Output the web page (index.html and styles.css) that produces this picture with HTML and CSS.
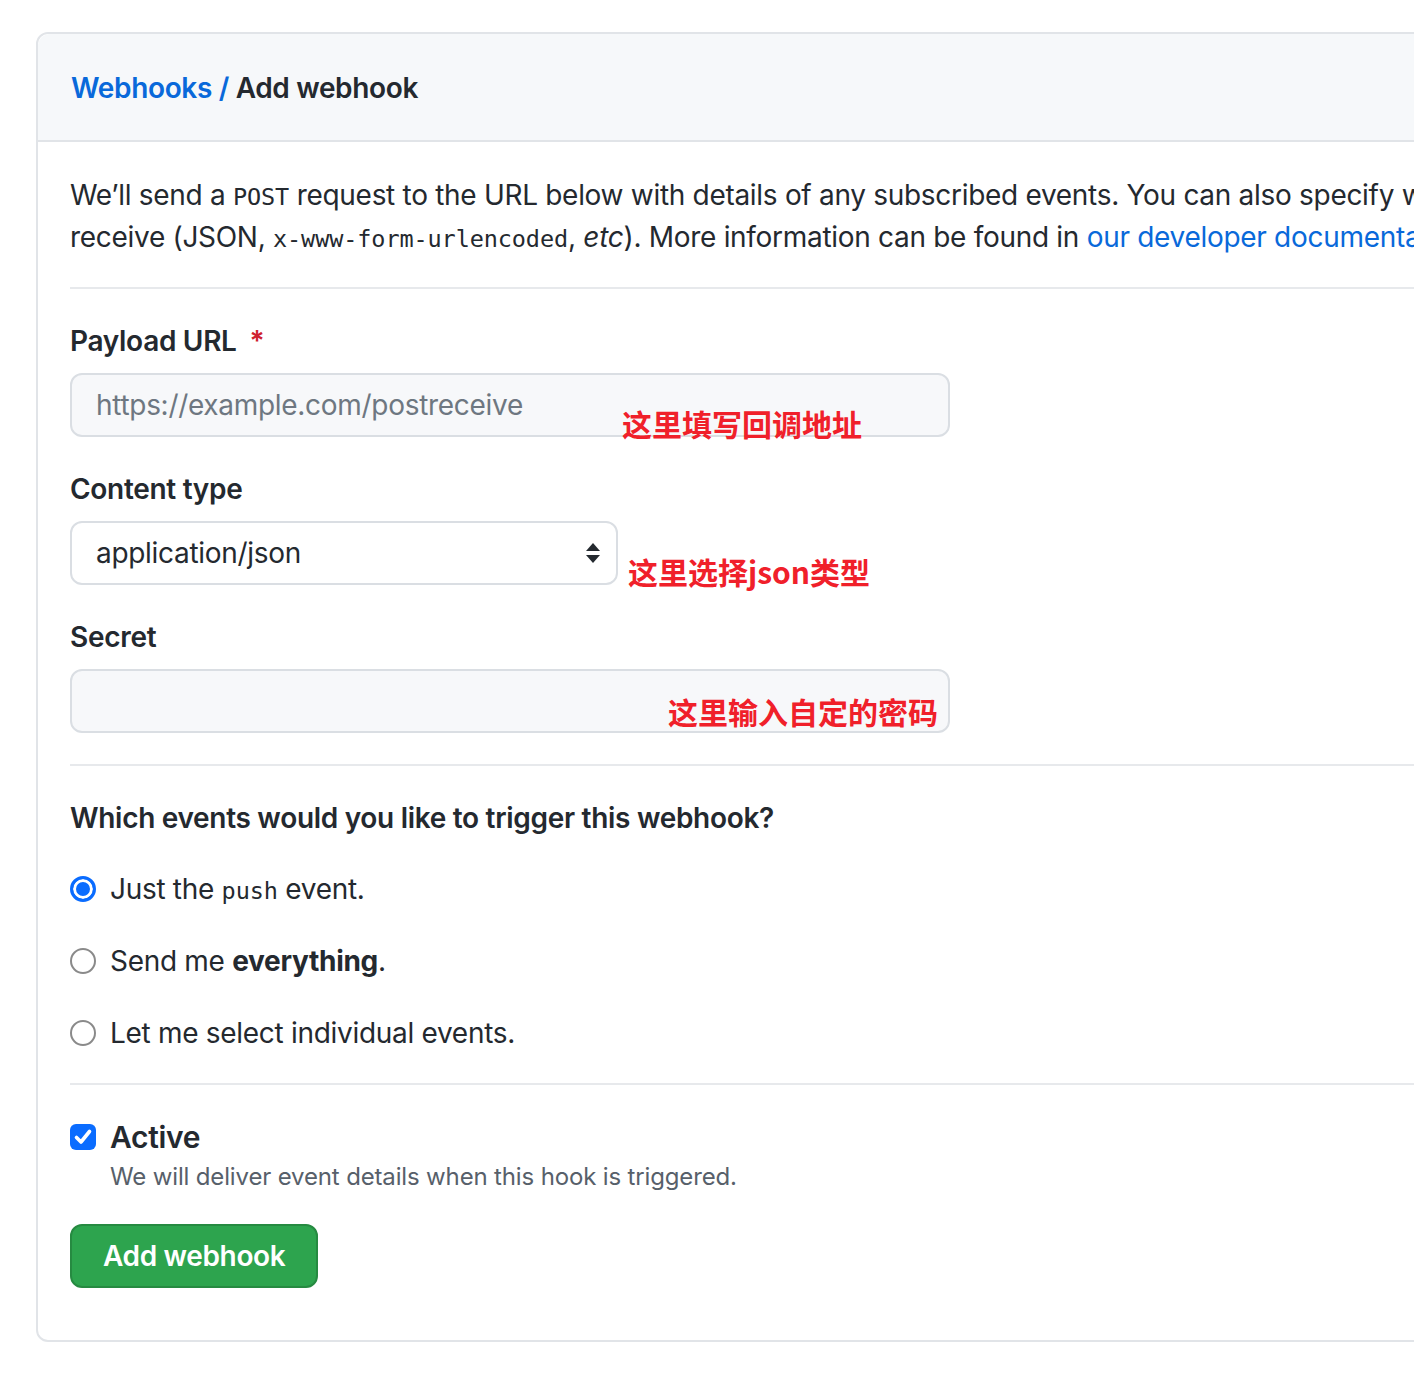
FILE: index.html
```html
<!DOCTYPE html>
<html lang="en">
<head>
<meta charset="utf-8">
<title>Add webhook</title>
<link rel="stylesheet" href="styles.css">
</head>
<body>
<div class="box">
  <div class="box-header">
    <h2 class="title"><a class="crumb" href="#">Webhooks</a> <span class="slash">/</span> Add webhook</h2>
  </div>
  <div class="box-body">
    <p class="intro">We’ll send a <code>POST</code> request to the URL below with details of any subscribed events. You can also specify which data format you’d like to<br>receive (JSON, <code>x-www-form-urlencoded</code>, <em>etc</em>). More information can be found in <a class="link" href="#">our developer documentation</a>.</p>
    <hr class="sep">
    <div class="group">
      <label class="label">Payload URL <span class="req">*</span></label>
      <div class="field-wrap wide">
        <div class="input"><span class="placeholder">https://example.com/postreceive</span></div>
        <span class="note note-url">这里填写回调地址</span>
      </div>
    </div>
    <div class="group">
      <label class="label">Content type</label>
      <div class="field-wrap">
        <div class="select">
          <span>application/json</span>
          <svg class="arrows" width="16" height="22" viewBox="0 0 16 22"><path d="M8 1 L15 9 L1 9 Z" fill="#24292f"/><path d="M1 13 L15 13 L8 21 Z" fill="#24292f"/></svg>
        </div>
        <span class="note note-type">这里选择json类型</span>
      </div>
    </div>
    <div class="group">
      <label class="label">Secret</label>
      <div class="field-wrap wide">
        <div class="input"></div>
        <span class="note note-secret">这里输入自定的密码</span>
      </div>
    </div>
    <hr class="sep">
    <h3 class="question">Which events would you like to trigger this webhook?</h3>
    <div class="radios">
      <div class="radio-row"><span class="radio checked"></span><span>Just the <code>push</code> event.</span></div>
      <div class="radio-row"><span class="radio"></span><span>Send me <strong>everything</strong>.</span></div>
      <div class="radio-row"><span class="radio"></span><span>Let me select individual events.</span></div>
    </div>
    <hr class="sep">
    <div class="active">
      <div class="check-row">
        <span class="checkbox"><svg width="26" height="26" viewBox="0 0 26 26"><path d="M6.5 13.5 L11 18 L19.5 7.5" fill="none" stroke="#fff" stroke-width="3.6" stroke-linecap="round" stroke-linejoin="round"/></svg></span>
        <span class="active-label">Active</span>
      </div>
      <p class="hint">We will deliver event details when this hook is triggered.</p>
    </div>
    <button class="btn" type="button">Add webhook</button>
  </div>
</div>
</body>
</html>
```
FILE: styles.css
```css
html, body {
  overflow: hidden;
}
body {
  margin: 0;
  background: #ffffff;
  font-family: Inter, "Liberation Sans", "Noto Sans CJK SC", sans-serif;
  color: #24292f;
  font-size: 28px;
  line-height: 42px;
}
.box {
  margin: 32px 0 0 36px;
  width: 1600px;
  border: 2px solid #e1e4e8;
  border-radius: 12px;
  background: #fff;
}
.box-header {
  background: #f6f8fa;
  border-bottom: 2px solid #e1e4e8;
  border-radius: 12px 12px 0 0;
  padding: 33px 33px 31px 33px;
}
.title {
  margin: 0;
  font-size: 28px;
  line-height: 42px;
  font-weight: 600;
  letter-spacing: -0.35px;
}
.crumb, .slash {
  color: #0969da;
  text-decoration: none;
}
.box-body {
  padding: 32px 32px 52px 32px;
}
.intro {
  margin: 0;
  white-space: nowrap;
  letter-spacing: -0.3px;
}
code {
  font-family: "DejaVu Sans Mono", "Liberation Mono", monospace;
  font-size: 23.5px;
  line-height: 1;
  letter-spacing: -0.1px;
}
.link {
  color: #0969da;
  text-decoration: none;
}
.sep {
  margin: 29px 0 31px 0;
  border: 0;
  height: 2px;
  background: #e7e9ec;
}
.group {
  margin-bottom: 31px;
}
.group:last-of-type {
  margin-bottom: 0;
}
.label {
  display: block;
  font-weight: 600;
  margin-bottom: 11px;
  letter-spacing: -0.3px;
}
.req {
  color: #cf222e;
  margin-left: 6px;
}
.field-wrap {
  position: relative;
  width: 548px;
}
.field-wrap.wide {
  width: 880px;
}
.input {
  height: 60px;
  border: 2px solid #dadee3;
  border-radius: 12px;
  background: #f7f8fa;
  display: flex;
  align-items: center;
  padding: 0 24px;
}
.placeholder {
  color: #6e7781;
  letter-spacing: -0.3px;
}
.select {
  height: 60px;
  border: 2px solid #dadee3;
  border-radius: 12px;
  background: #fff;
  display: flex;
  align-items: center;
  justify-content: space-between;
  padding: 0 15px 0 24px;
  letter-spacing: -0.3px;
}
.arrows {
  display: block;
}
.note {
  position: absolute;
  color: #f0202a;
  font-weight: 700;
  font-size: 30px;
  line-height: 32px;
  white-space: nowrap;
  font-family: "Noto Sans CJK SC", "Noto Sans", sans-serif;
}
.note-url {
  left: 552px;
  top: 34px;
}
.note-type {
  left: 558px;
  top: 34px;
}
.note-secret {
  left: 598px;
  top: 26px;
}
.question {
  margin: 0;
  font-size: 28px;
  line-height: 42px;
  font-weight: 600;
  letter-spacing: -0.3px;
}
.radios {
  margin-top: 29px;
  display: flex;
  flex-direction: column;
  gap: 30px;
}
.radio-row {
  display: flex;
  align-items: center;
  gap: 14px;
  height: 42px;
  letter-spacing: -0.3px;
}
.radio {
  width: 26px;
  height: 26px;
  box-sizing: border-box;
  border-radius: 50%;
  border: 2px solid #8a8a8a;
  background: #fff;
  flex: none;
}
.radio.checked {
  border: 3px solid #0a6cff;
  background: #0a6cff;
  box-shadow: inset 0 0 0 3px #fff;
}
.active {
  margin-bottom: 29px;
}
.check-row {
  display: flex;
  align-items: center;
  gap: 14px;
  height: 42px;
}
.checkbox {
  width: 26px;
  height: 26px;
  border-radius: 6px;
  background: #0a6cff;
  display: block;
  flex: none;
}
.checkbox svg {
  display: block;
}
.active-label {
  font-weight: 600;
  font-size: 30px;
  letter-spacing: -0.3px;
}
.hint {
  margin: 1px 0 0 40px;
  font-size: 24px;
  line-height: 36px;
  color: #57606a;
  letter-spacing: -0.15px;
}
.btn {
  display: block;
  height: 64px;
  padding: 0 31px;
  border: 2px solid #268a41;
  border-radius: 12px;
  background: #2da44e;
  color: #fff;
  font-family: inherit;
  font-size: 28px;
  font-weight: 600;
  letter-spacing: -0.35px;
}
```
